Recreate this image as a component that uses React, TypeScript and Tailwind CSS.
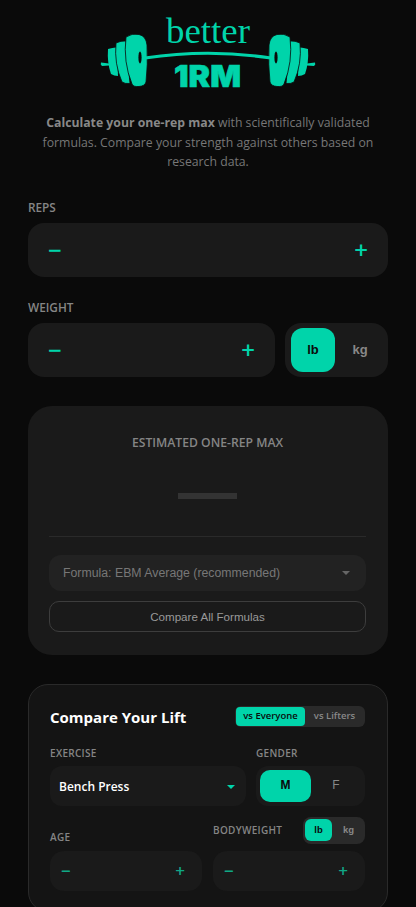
function Logo() {
  return (
    <svg width="240" height="100" viewBox="-2 0 240 100" className="block">
      <g fill="#00d4aa">
        <text x="76" y="43" fontFamily="'Liberation Serif', serif" fontSize="35" textLength="84" lengthAdjust="spacingAndGlyphs">better</text>
        <text x="84" y="87" fontFamily="Inter, sans-serif" fontSize="30" fontWeight="900" stroke="#00d4aa" strokeWidth="0.6" textLength="67" lengthAdjust="spacingAndGlyphs">1RM</text>
        {[0, 1].map((side) => (
          <g key={side} transform={side ? 'matrix(-1 0 0 1 236 0)' : undefined}>
            <path d="M11 62.5 L19 63.5 L19 65.5 L12 66 Q10 64.5 11 62.5 Z" />
            <path d="M18 49 Q24 47 27 47.5 L28 76 Q24 76 21 74 Q17 63 18 49 Z" />
            <path d="M26 43 Q31 40.5 36 41 L40 83.5 Q35 84 32 82 Q24 64 26 43 Z" stroke="#0a0a0a" strokeWidth="0.8" />
            <path d="M36 37 Q42 33 49 34.5 Q56 36 57 45 Q58 65 56 82 Q55 86 49 86.5 Q43 87 42 84 Q33 62 36 37 Z" stroke="#0a0a0a" strokeWidth="0.8" />
            <ellipse cx="50" cy="57.5" rx="1.6" ry="6" fill="#0a0a0a" />
          </g>
        ))}
      </g>
      <path d="M55 58 Q118 48.5 181 58" fill="none" stroke="#00d4aa" strokeWidth="3.2" />
    </svg>
  );
}

function Stepper({ small = false, className = '' }: { small?: boolean; className?: string }) {
  const size = small ? 'text-[#10a886] text-[17px]' : 'text-[#00d4aa] text-[24px]';
  return (
    <div
      className={`flex items-center justify-between bg-[#1a1a1a] ${
        small ? 'h-10 rounded-[14px] pl-[11px] pr-[17px]' : 'h-[54px] rounded-2xl pl-5 pr-5'
      } ${className}`}
    >
      <span className={`${size} font-semibold leading-none`}>−</span>
      <span className={`${size} font-semibold leading-none`}>+</span>
    </div>
  );
}

function Label({ children, className = '' }: { children: React.ReactNode; className?: string }) {
  return <div className={`text-[11.8px] font-semibold leading-4 uppercase text-[#858585] ${className}`}>{children}</div>;
}

function SmallLabel({ children }: { children: React.ReactNode }) {
  return <div className="text-[10px] font-semibold leading-4 tracking-[0.3px] uppercase text-[#858585]">{children}</div>;
}

export default function App() {
  return (
    <div className="h-[907px] overflow-hidden bg-[#0a0a0a] px-7 font-['Open_Sans',sans-serif]">
      {/* Header */}
      <div className="flex justify-center">
        <Logo />
      </div>
      <p className="mt-[13px] px-2 text-center text-[12.25px] leading-[19.5px] text-[#777777]">
        <b className="font-bold text-[#888888]">Calculate your one-rep max</b> with scientifically validated formulas.
        Compare your strength against others based on research data.
      </p>

      {/* Inputs */}
      <Label className="mt-[27px]">Reps</Label>
      <Stepper className="mt-2" />
      <Label className="mt-[22px]">Weight</Label>
      <div className="mt-2 flex gap-[10px]">
        <Stepper className="flex-1" />
        <div className="flex h-[54px] w-[103px] items-center gap-[3px] rounded-2xl bg-[#1a1a1a] pl-[6px]">
          <div className="flex h-11 w-11 items-center justify-center rounded-xl bg-[#00d4aa] font-['Liberation_Sans',sans-serif] text-[13px] font-bold text-[#0a0a0a]">
            lb
          </div>
          <div className="flex h-11 w-11 items-center justify-center font-['Liberation_Sans',sans-serif] text-[13px] font-bold text-[#888888]">
            kg
          </div>
        </div>
      </div>

      {/* Result */}
      <div className="mt-[29px] h-[249px] rounded-3xl bg-[#1a1a1a] px-[21px] pr-[22px] pt-[29px]">
        <div className="text-center text-[12.2px] font-semibold leading-4 uppercase text-[#858585]">Estimated one-rep max</div>
        <div className="mx-auto mt-[42px] h-[6px] w-[59px] bg-[#333333]" />
        <div className="mt-[37px] h-px bg-[#2a2a2a]" />
        <div className="mt-[18px] flex h-9 items-center justify-between rounded-xl bg-[#222222] pl-[14px] pr-4 pt-px font-['Liberation_Sans',sans-serif] text-[12.3px] text-[#777777]">
          <span>Formula: EBM Average (recommended)</span>
          <span className="h-0 w-0 border-x-[4px] border-t-[4px] border-x-transparent border-t-[#666666]" />
        </div>
        <div className="mt-[10px] flex h-[31px] items-center justify-center rounded-[10px] border border-[#3d3d3d] pt-px font-['Liberation_Sans',sans-serif] text-[11.6px] text-[#999999]">
          Compare All Formulas
        </div>
      </div>

      {/* Compare */}
      <div className="mt-[29px] rounded-[20px] border border-[#2a2a2a] bg-[#141414] pb-5 pl-[21px] pr-[22px] pt-[21px]">
        <div className="flex items-center justify-between">
          <h2 className="text-[15px] font-bold leading-[22px] text-white">Compare Your Lift</h2>
          <div className="flex h-[21px] w-[130px] items-center rounded-md bg-[#2a2a2a] px-px text-[9.5px] font-semibold">
            <span className="flex h-[19px] w-[69px] items-center justify-center rounded bg-[#00d4aa] text-[#0a0a0a]">
              vs Everyone
            </span>
            <span className="flex-1 text-center text-[#888888]">vs Lifters</span>
          </div>
        </div>

        <div className="mt-[17px] flex gap-[10px]">
          <div className="w-[196px]">
            <SmallLabel>Exercise</SmallLabel>
            <div className="mt-[5px] flex h-10 items-center justify-between rounded-xl bg-[#1a1a1a] pl-[9px] pr-[11px] pt-[3px] text-[12px] font-semibold text-white">
              <span>Bench Press</span>
              <span className="h-0 w-0 border-x-[4px] border-t-[4px] border-x-transparent border-t-[#00d4aa]" />
            </div>
          </div>
          <div className="flex-1">
            <SmallLabel>Gender</SmallLabel>
            <div className="mt-[5px] flex h-10 items-center rounded-xl bg-[#1a1a1a] px-1 font-['Liberation_Sans',sans-serif] text-[12px]">
              <span className="flex h-8 w-[51px] items-center justify-center rounded-[10px] bg-[#00d4aa] pb-px font-bold text-[#0a0a0a]">
                M
              </span>
              <span className="flex-1 pb-px text-center text-[#888888]">F</span>
            </div>
          </div>
        </div>

        <div className="mt-[11px] flex gap-[11px]">
          <div className="flex-1">
            <div className="flex h-[28px] items-end">
              <SmallLabel>Age</SmallLabel>
            </div>
            <Stepper small className="mt-[6px]" />
          </div>
          <div className="flex-1">
            <div className="flex h-[27px] items-center justify-between">
              <SmallLabel>Bodyweight</SmallLabel>
              <div className="flex h-[27px] w-[62px] items-center rounded-lg bg-[#2a2a2a] pl-[2px] font-['Liberation_Sans',sans-serif] text-[9.5px] font-bold">
                <span className="flex h-[22px] w-[27px] items-center justify-center rounded-md bg-[#00d4aa] text-[#0a0a0a]">
                  lb
                </span>
                <span className="flex-1 text-center text-[#888888]">kg</span>
              </div>
            </div>
            <Stepper small className="mt-[7px]" />
          </div>
        </div>
      </div>
    </div>
  );
}
